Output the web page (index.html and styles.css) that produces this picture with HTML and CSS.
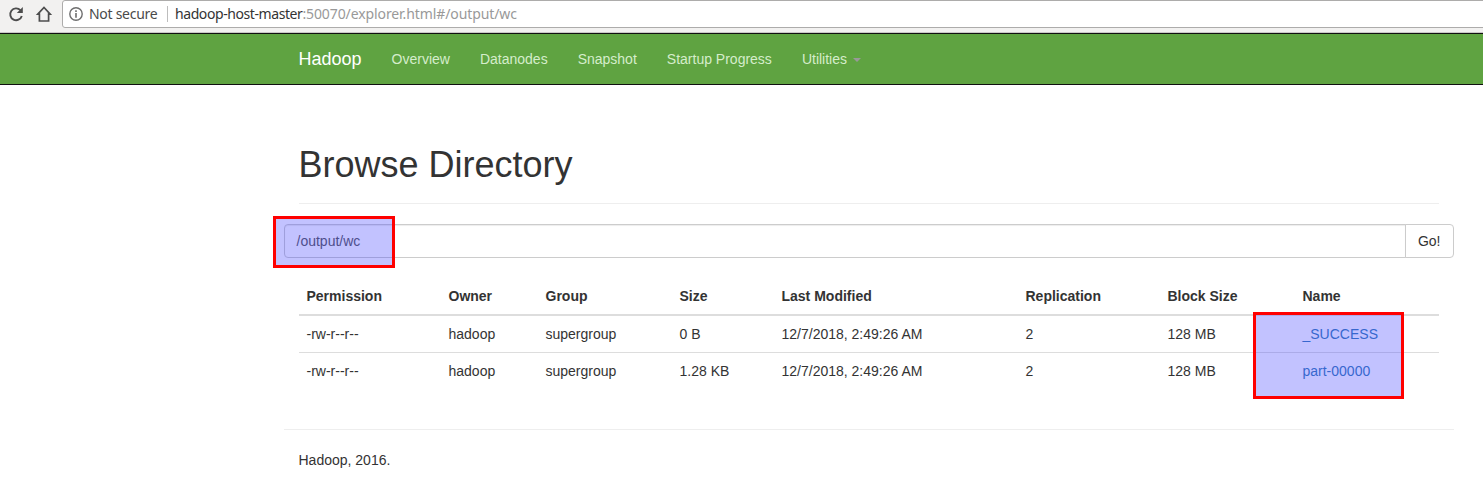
FILE: index.html
```html
<!DOCTYPE html>
<html lang="en">
<head>
<meta charset="utf-8">
<title>Browsing HDFS</title>
<link rel="stylesheet" href="styles.css">
</head>
<body>
<div class="toolbar">
  <svg class="tool-icon reload" width="16" height="16" viewBox="0 0 16 16"><path d="M12.4 4.2A5.9 5.9 0 1 0 13.8 10" fill="none" stroke="#4d4d4d" stroke-width="1.9"/><path d="M14.8 1v6H8.8z" fill="#4d4d4d"/></svg>
  <svg class="tool-icon home" width="18" height="17" viewBox="0 0 18 17"><path d="M2.8 9.1 9 2.5 15.2 9.1H13.6V16H4.4V9.1z" fill="none" stroke="#4d4d4d" stroke-width="1.7"/></svg>
  <div class="omnibox">
    <svg class="info" width="14" height="14" viewBox="0 0 14 14"><circle cx="7" cy="7" r="6.2" fill="none" stroke="#6e6e6e" stroke-width="1.4"/><path d="M6.2 3.3h1.6v1.6H6.2zM6.2 6.1h1.6v4.6H6.2z" fill="#6e6e6e"/></svg>
    <span class="secure">Not secure</span>
    <span class="divider"></span>
    <span class="url"><span class="host">hadoop-host-master</span><span class="path">:50070/explorer.html#/output/wc</span></span>
  </div>
</div>
<header class="navbar">
  <a class="brand">Hadoop</a>
  <nav class="nav"><a>Overview</a><a>Datanodes</a><a>Snapshot</a><a>Startup Progress</a><a>Utilities <b class="caret"></b></a></nav>
</header>
<main class="container">
  <div class="page-header"><h1>Browse Directory</h1></div>
  <form class="path-form">
    <div class="path-input">/output/wc</div>
    <div class="go">Go!</div>
    <span class="mark mark-path"></span>
  </form>
  <div class="listing">
    <table>
      <colgroup><col class="c-perm"><col class="c-owner"><col class="c-group"><col class="c-size"><col class="c-date"><col class="c-repl"><col class="c-block"><col class="c-name"></colgroup>
      <thead><tr><th>Permission</th><th>Owner</th><th>Group</th><th>Size</th><th>Last Modified</th><th>Replication</th><th>Block Size</th><th>Name</th></tr></thead>
      <tbody>
        <tr><td>-rw-r--r--</td><td>hadoop</td><td>supergroup</td><td>0 B</td><td>12/7/2018, 2:49:26 AM</td><td>2</td><td>128 MB</td><td><a>_SUCCESS</a></td></tr>
        <tr><td>-rw-r--r--</td><td>hadoop</td><td>supergroup</td><td>1.28 KB</td><td>12/7/2018, 2:49:26 AM</td><td>2</td><td>128 MB</td><td><a>part-00000</a></td></tr>
      </tbody>
    </table>
    <span class="mark mark-files"></span>
  </div>
  <footer>Hadoop, 2016.</footer>
</main>
</body>
</html>
```
FILE: styles.css
```css
* { box-sizing: border-box; }
body {
  margin: 0;
  height: 496px;
  overflow: hidden;
  background: #fff;
  color: #333;
  font: 14px/20px "Liberation Sans", Arial, sans-serif;
}
.toolbar {
  display: flex;
  align-items: flex-start;
  height: 33px;
  background: #f2f1f0;
  border-bottom: 1px solid #c9c8c6;
}
.tool-icon { flex: none; }
.reload { margin: 6px 0 0 8px; }
.home { margin: 5px 0 0 11px; }
.omnibox {
  display: flex;
  align-items: center;
  flex: 1;
  height: 28px;
  margin: 0 -4px 0 9px;
  padding-left: 6px;
  background: #fff;
  border: 1px solid #adacab;
  border-radius: 3px;
  font: 14px/20px "Noto Sans", sans-serif;
  white-space: nowrap;
}
.info { flex: none; margin-right: 6px; }
.secure { width: 78px; color: #4a4a4a; letter-spacing: -0.28px; }
.divider { width: 1px; height: 16px; margin-right: 7px; background: #bdbdbd; }
.host { color: #333; letter-spacing: -0.42px; }
.path { color: #999; letter-spacing: -0.1px; }
.navbar {
  display: flex;
  height: 52px;
  padding-left: 298.5px;
  background: #5fa341;
  border: solid #101010;
  border-width: 1px 0;
}
.brand { padding: 15px 15px 15px 0; color: #fff; font-size: 18px; }
.nav { display: flex; }
.nav a { padding: 15px; color: #d5edcb; }
.caret {
  display: inline-block;
  margin-left: 2px;
  vertical-align: middle;
  border: 4px solid transparent;
  border-top-color: #999;
  border-bottom: 0;
}
.container { width: 1170px; margin-left: 283.5px; padding-top: 60px; }
.page-header { margin: 0 15px 20px; padding-bottom: 9px; border-bottom: 1px solid #eee; }
h1 { margin: 0 0 9px; font-size: 36px; font-weight: 500; line-height: 40px; }
.path-form { position: relative; display: flex; height: 34px; }
.path-input {
  flex: 1;
  padding: 6px 12px;
  color: #555;
  border: 1px solid #ccc;
  border-radius: 4px 0 0 4px;
  box-shadow: inset 0 1px 1px rgba(0, 0, 0, .075);
}
.go {
  margin-left: -1px;
  padding: 6px 12px;
  border: 1px solid #ccc;
  border-radius: 0 4px 4px 0;
}
.listing { position: relative; height: 151px; margin: 20px 15px 0; }
table { width: 1140px; table-layout: fixed; border-spacing: 0; }
th, td { padding: 8px; text-align: left; }
th { border-bottom: 2px solid #ddd; }
tr + tr td { border-top: 1px solid #ddd; }
td a { color: #337ab7; }
.c-perm, .c-repl { width: 142px; }
.c-owner { width: 97px; }
.c-group { width: 134px; }
.c-size { width: 102px; }
.c-date { width: 244px; }
.c-block { width: 135px; }
.c-name { width: 144px; }
.mark {
  position: absolute;
  background: rgba(64, 64, 255, .32);
  border: 3px solid #f00;
  background-clip: padding-box;
}
.mark-path { left: -10.5px; top: -8px; width: 122px; height: 52px; }
.mark-files { left: 954.5px; top: 34px; width: 151px; height: 87px; }
footer { padding: 20px 15px; border-top: 1px solid #eee; }
```
